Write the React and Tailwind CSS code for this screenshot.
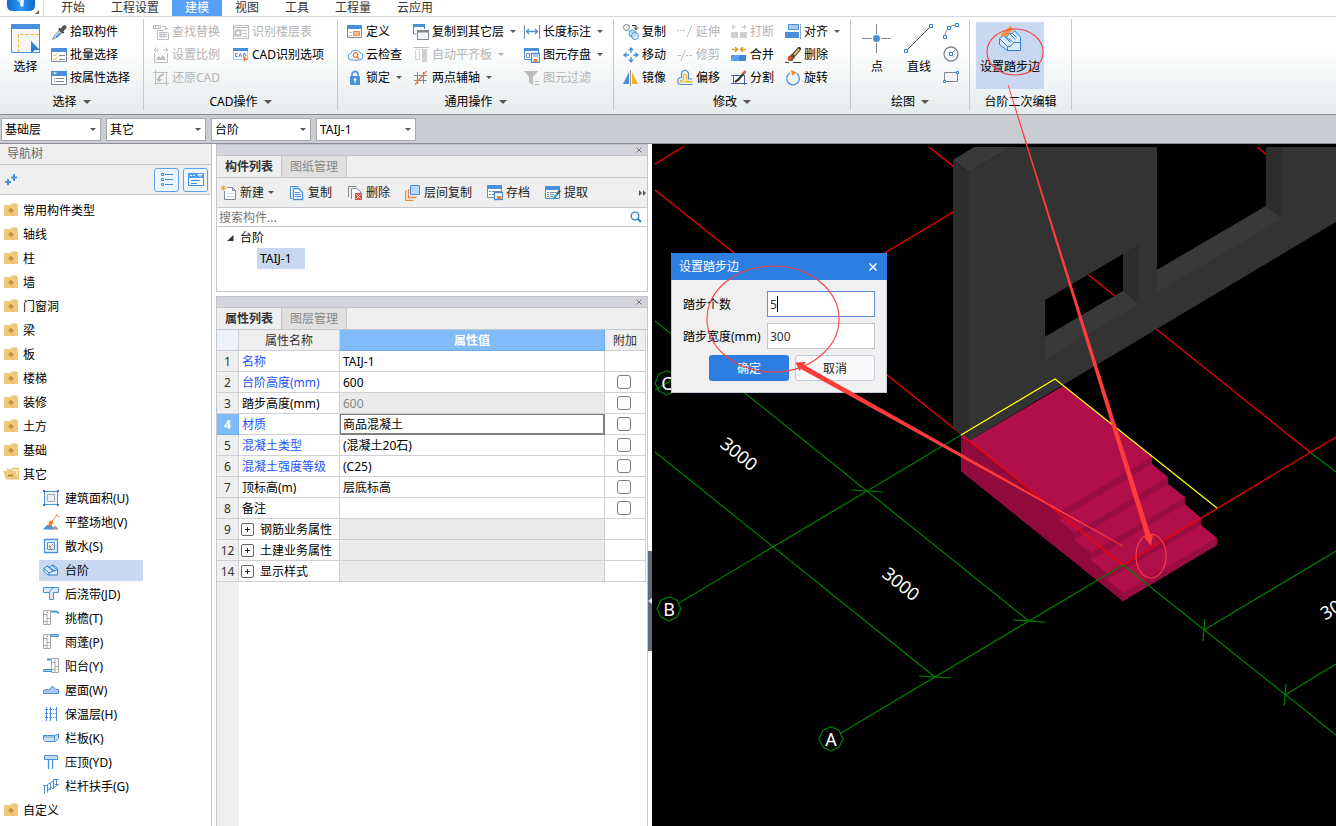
import React from "react";

const B = "#4a8fdc";
const G = "#bdbdbd";
const D = "#7d8992";

const art = {
  picker: (
    <>
      <path d="M1.500 15.500L3 12 8 6.500 10.500 9 5 14z" fill="#dfe6ea" stroke="#8896a0" />
      <path d="M5 13.500L9 9.500" stroke="#4a8fdc" strokeWidth="2" />
      <path d="M8 4.500L12.500 9" stroke="#333" strokeWidth="2" />
      <path d="M10.500 6.500L13.500 3.200" stroke="#555" strokeWidth="4" strokeLinecap="round" />
    </>
  ),
  batch: (
    <>
      <path d="M.5 2.500h15v12H.5z" fill="#fff" stroke={D} />
      <path d="M0 1h16v4H0z" fill={B} />
      <path d="M2 7.500l1.500 1.500L6 6.500M2 11.500l1.500 1.500L6 10.500" stroke="#f0a020" fill="none" />
      <path d="M8 8.500h6M8 12.500h6" stroke={D} />
    </>
  ),
  byprop: (
    <>
      <path d="M.5 2.500h15v12H.5z" fill="#fff" stroke={D} />
      <path d="M0 1h16v5H0z" fill={B} />
      <path d="M2 2.500h4l-2 2z" fill="#fff" />
      <path d="M3 8.500h1M5 8.500h8M3 11.500h1M5 11.500h8" stroke={D} />
    </>
  ),
  findrep: (
    <>
      <path d="M.5 1.500h7v3h-7zM2.500 1.500v3M5.500 1.500v3" fill="none" stroke={G} />
      <path d="M9 2.500h4v3M11 4l2 2 2-2" fill="none" stroke={G} />
      <path d="M4.500 6.500h6M4.500 6.500v9h11V9h-2" fill="none" stroke={G} />
      <path d="M6 8.500h8M6 10.500h8M6 12.500h8M8 8v6M11 8v6" stroke={G} />
    </>
  ),
  ratio: (
    <>
      <path d="M1 3h5M3.500.5L1 3l2.500 2.500M10 3h5M12.500.5L15 3l-2.500 2.500" fill="none" stroke={G} />
      <path d="M1.500 6.500v9h13v-9" fill="none" stroke={G} />
      <path d="M3 13l2.500-4 2 2L10 8l3 5z" fill={G} />
    </>
  ),
  restore: (
    <>
      <path d="M2.500 0v15M13.500 2v14M0 2.500h15M2 13.500h14" stroke={G} />
      <path d="M11 4.500C7 5 5.500 7 5.500 10" fill="none" stroke={G} strokeWidth="2" />
      <path d="M3 9h6l-3 3.500z" fill={G} />
    </>
  ),
  floors: (
    <>
      <path d="M.5 1.500h15v13H.5zM.5 3.500h15" fill="#fff" stroke={G} />
      <path d="M2.500 6.500h5v5h-5z" fill="none" stroke={G} strokeWidth="2" />
      <path d="M9.500 6.500H14M9.500 9.500H14M9.500 12.500H14" stroke={G} />
    </>
  ),
  cadopt: (
    <>
      <path d="M.5 2.500h14v10H.5z" fill="#fff" stroke="#a9cdf2" />
      <path d="M0 1h15v3H0z" fill={B} />
      <path d="M4.500 6.500h-2v3h2M6 10l1-3.500h.5L8.500 10M10.500 10V6.500h1.500l1 1.500-1 1.500" fill="none" stroke={B} />
      <path d="M10 8.500l5 4-2.200.4L11 15z" fill="#f07a3c" />
    </>
  ),
  define: (
    <>
      <path d="M.5 2.500h14v11H.5z" fill="#fff" stroke={D} />
      <path d="M0 1h15v4H0z" fill={B} />
      <path d="M2 8.500h3M2 11.500h3" stroke={G} />
      <path d="M6.500 7.500h6v4h-6z" fill="#f7c08a" stroke="#e88a3a" />
    </>
  ),
  cloud: (
    <>
      <path d="M4 13a3.300 3.300 0 01-.3-6.500 5 5 0 019-1A3.800 3.800 0 0112.500 13z" fill="#fff" stroke={B} />
      <circle cx="8.500" cy="8" r="2.300" fill="none" stroke="#f07a3c" strokeWidth="1.300" />
      <path d="M10.200 9.800l2 2.200" stroke="#f07a3c" strokeWidth="1.300" />
    </>
  ),
  lock: (
    <>
      <path d="M5 7V4.500a3 3 0 016 0V7" fill="none" stroke="#5b97dc" strokeWidth="1.800" />
      <rect x="3" y="6" width="10" height="9" rx="1" fill="#4a8fdc" />
      <circle cx="8" cy="9.500" r="1.200" fill="#fff" />
      <path d="M8 10v3" stroke="#fff" />
    </>
  ),
  copyto: (
    <>
      <path d="M3.500 10H.5V1.500h11V5" fill="none" stroke={B} />
      <path d="M0 0h12v3H0z" fill={B} />
      <path d="M4.500 7.500h11v8h-11z" fill="#f4f8fc" stroke={D} />
      <path d="M4 6h12v2.500H4z" fill={D} />
    </>
  ),
  level: (
    <>
      <path d="M0 .5h16" stroke={G} />
      <path d="M2.500 2.500h4v10h-4z" fill="#fff" stroke="#d5d5d5" />
      <path d="M9 2h5v13H9z" fill="#cfcfcf" />
    </>
  ),
  twopt: (
    <>
      <path d="M4.500 2v12M10.500 2v12M1 5.500h13M1 10.500h13" stroke={D} />
      <path d="M2 14.500L13.500 1" stroke="#f07a3c" strokeWidth="1.200" />
    </>
  ),
  dim: (
    <>
      <path d="M.5 1v14M15.500 1v14" stroke={D} />
      <path d="M2 7.500h12M5 5L2.500 7.500 5 10M11 5l2.500 2.500L11 10" fill="none" stroke={B} strokeWidth="1.300" />
    </>
  ),
  save: (
    <>
      <path d="M.5 2.500h14v10H.5z" fill="#fff" stroke={B} />
      <path d="M0 1h15v3H0z" fill={B} />
      <path d="M2.500 6.500h3v4h-3z" fill="none" stroke={D} />
      <path d="M7.500 6.500h8v9h-8z" fill="#fff" stroke={B} strokeWidth="1.400" />
      <path d="M9 7h5v3H9z" fill="#a9cdf2" />
      <path d="M9.500 12h4v3h-4z" fill="#f07a3c" />
    </>
  ),
  filter: (
    <>
      <path d="M0 1h14L9 7v8l-4-2.500V7z" fill={G} />
      <path d="M11 11.500h4M11 14.500h4" stroke={G} />
    </>
  ),
  copy: (
    <>
      <circle cx="3.500" cy="3.500" r="3" fill="#eee" stroke={D} />
      <circle cx="9.500" cy="9.500" r="3.500" fill="#bfe0fb" stroke={B} />
      <circle cx="12" cy="12" r="3.500" fill="#d6ecfd" fillOpacity=".6" stroke={B} />
      <path d="M9 1.500h4v4M11 3.500l2 2 2-2" fill="none" stroke="#222" />
    </>
  ),
  move: (
    <>
      <path d="M8 0l3 3.500H5zM8 16l3-3.500H5zM0 8l3.500-3v6zM16 8l-3.500-3v6z" fill={B} />
      <path d="M8 3v3M8 10v3M3 8h3M10 8h3" stroke={B} strokeWidth="1.400" />
    </>
  ),
  mirror: (
    <>
      <path d="M7.500 0v16" stroke="#999" />
      <path d="M6 2v12H0z" fill={B} />
      <path d="M9 2v12h6z" fill="#f5b21c" />
    </>
  ),
  extend: <path d="M0 6.500h2M3 6.500h2M6 6.500h2M15 1l-5 12" stroke={G} />,
  trim: <path d="M0 8.500h4M9 8.500h2M12 8.500h3M8 3L4 14" stroke={G} />,
  offset: (
    <>
      <path
        d="M15.500 9.500H11.500V4.500a3.500 3.500 0 00-7 0V8A3.500 3.500 0 004 15h11.500"
        transform="translate(0 -.5)"
        fill="none"
        stroke={B}
        strokeWidth="1.200"
      />
      <path d="M15.500 11.500H9.500V5q-1.500-2-3 0v5Q3 10 3 12h12.500" fill="none" stroke="#f0b32a" strokeWidth="1.200" />
    </>
  ),
  brk: (
    <>
      <path d="M1 3h4M3 1L1 3l2 2M10 3h5M13 1l2 2-2 2" fill="none" stroke={G} />
      <path d="M0 8h7v6H0zM9 8h7v6H9z" fill="#cfcfcf" />
    </>
  ),
  merge: (
    <>
      <path d="M1 2.500h5M4 0l2.500 2.500L4 5M15 2.500h-5M12 0L9.500 2.500 12 5" fill="none" stroke="#e8902a" strokeWidth="1.300" />
      <path d="M0 8h8v6H0z" fill="#5ba0ea" />
      <path d="M8 8h7v6H8z" fill="#3f86d8" />
    </>
  ),
  split: (
    <>
      <path d="M2.500 5.500h11v8h-11zM0 5.500h5M0 13.500h16M13.500 5v10" fill="none" stroke="#4763a8" />
      <path d="M4 12l4-3" stroke="#222" strokeWidth="2" />
      <path d="M7 10l6-7" stroke="#333" strokeWidth="2" />
      <path d="M12 4l2.500-3" stroke="#d55b3c" strokeWidth="2.500" />
    </>
  ),
  align: (
    <>
      <path d="M3.500.5h10v5h-10z" fill="#a9cdf7" stroke={B} />
      <path d="M0 8h14v6H0z" fill={B} />
      <path d="M15.500 0v15" stroke="#9ab" />
    </>
  ),
  erase: (
    <>
      <path d="M0 15.500h4M8 15.500h8" stroke="#444" />
      <path d="M8 9l6-7" stroke="#333" strokeWidth="4" strokeLinecap="round" />
      <path d="M9 8l5-6" stroke="#e5b96a" strokeWidth="2" />
      <path d="M3 10l4-3 3 3-3 4H4z" fill="#7a4a22" />
      <circle cx="5" cy="11.500" r="2.300" fill="#e04a1c" />
    </>
  ),
  rotate: (
    <>
      <path d="M5 3a6.300 6.300 0 107 .6" fill="none" stroke={B} strokeWidth="1.300" />
      <path d="M6 0l6 2.500L7 5.500z" fill="#f08a2c" />
    </>
  ),
  folder: (
    <>
      <path d="M8 1.500h6.500V3H8zM1 3h14v11H1z" fill="#efc97c" />
      <path d="M8 6v5M5.500 8.500h5" stroke="#c09036" strokeWidth="1.800" />
    </>
  ),
  folderOpen: (
    <>
      <path d="M3.500 4h5l1-1.500h6V13H14" fill="#fbefd2" stroke="#e8c069" strokeWidth="1.300" />
      <path d="M0 5h12.500L15 13.500H3z" fill="#efc97c" />
      <path d="M5 9.500h5" stroke="#a67c30" strokeWidth="1.500" />
    </>
  ),
  area: (
    <>
      <path d="M1.500 1.500h13v13h-13z" fill="#eef4fb" stroke={B} />
      <path d="M4.500 4.500h7v7h-7z" fill="#eee" stroke="#aaa" />
      <path d="M0 0h2v2H0zM14 0h2v2h-2zM0 14h2v2H0zM14 14h2v2h-2z" fill="#41729f" />
    </>
  ),
  flat: (
    <>
      <path d="M0 15.500L4 11h4l4 4.500z" fill={B} />
      <path d="M8 15.500l4-4 4 4z" fill="#999" />
      <path d="M9 7l5-6M12.500 0L16 3" stroke="#e8813c" />
      <path d="M7 7l3 1-1.500 3L5.500 12z" fill="#f07a2c" stroke="#f07a2c" strokeLinejoin="round" />
    </>
  ),
  apron: (
    <>
      <path d="M1.500 1.500h13v13h-13z" fill="#eef5fd" stroke={B} strokeWidth="1.300" />
      <path d="M4.500 4.500h7v7h-7z" fill="#fff" stroke={B} />
      <path d="M10 6L6.500 9.500M6.500 7v3h3" fill="none" stroke="#f07a2c" />
    </>
  ),
  steps: (
    <path
      d="M1 6.500L4 4l3 1.500L9 3l3 1 2.500 3v6H5L1 9.500zM4 4l6 5M7 5.500l5 4M9 3l4 4.500M1 6.500l5 4.500v2M6 11l4-2 4.500-1.500"
      fill="#dceafb"
      stroke="#2f83d2"
    />
  ),
  jd: (
    <>
      <path d="M.5 1.500h15v5h-5v7h-4v-7h-6z" fill="#dbe9fa" stroke={B} />
      <path d="M6.500 6.500Q7 3 11 1.500" fill="none" stroke={B} />
    </>
  ),
  eave: (
    <>
      <path d="M.5.5h7v14h-7zM.5 4.500H4M4 8.500h3.500M.5 11.500H4M4 .5v14" fill="#fff" stroke="#a6a6a6" />
      <path d="M8 1.500h5l3 1.500" fill="none" stroke={B} strokeWidth="1.800" />
    </>
  ),
  canopy: (
    <>
      <path d="M.5.5h7v14h-7zM.5 4.500H4M4 8.500h3.500M.5 11.500H4M4 .5v14" fill="#fff" stroke="#a6a6a6" />
      <path d="M8 .5h7.500v2H8z" fill="#a9cdf2" stroke={B} />
    </>
  ),
  balcony: (
    <>
      <path d="M8.500.5h7v14h-7zM8.500 4.500H12M12 8.500h3.500M8.500 11.500H12M12 .5v14" fill="#fff" stroke="#a6a6a6" />
      <path d="M4 1.500h4" stroke={B} strokeWidth="2" />
      <path d="M.5 11.500h8v2h-8z" fill="#a9cdf2" stroke={B} />
    </>
  ),
  roof: <path d="M.5 11.500v-3l3.500-1 2 .5 2-2.500 2-1 3 3h2.500v4z" fill="#a9c8ee" stroke={B} />,
  insul: (
    <>
      <path d="M3.500 1v14M7.500 1v14M13.500 1v14" stroke={B} />
      <path d="M2 3.500h12M2 7.500h12M2 11.500h12" stroke={B} strokeDasharray="1 1" />
    </>
  ),
  slab: <path d="M.5 5.500h11v6H2.500l-2-1.500zM11.500 5.500l4-1.500v4l-3 3.500h-1M.5 5.500l2 1.500h9" fill="#cfe1f7" stroke={B} />,
  coping: (
    <>
      <path d="M1.500 1.500h13v4h-13z" fill="#c3daf5" stroke={B} />
      <path d="M5.500 6v9M9.500 6v9" stroke={B} strokeWidth="1.300" />
    </>
  ),
  rail: (
    <path d="M0 7.500h4M1.500 7v8.500M4.500 7v7.500M4 13l5-4M4 7l6-4M7.500 5v7M10.500 2v9M9 11l6-4.500M10 1.500h5.500M13.500 1v7M12 6.500h4" fill="none" stroke={B} />
  ),
  fresh: (
    <>
      <path d="M6 2.500h5.500l3 3v9h-11V6" fill="#fff" stroke={D} />
      <path d="M11.500 2.500v3h3" fill="none" stroke={D} />
      <path d="M6 8.500h7M6 11.500h7" stroke="#ccd" />
      <path d="M0 3h5M2.500.5v5M.5 1l4 4M4.500 1l-4 4" stroke="#f0a02c" />
    </>
  ),
  dup: (
    <>
      <path d="M3 13.500H1.500v-12h8" fill="none" stroke={B} />
      <path d="M4.500 3.500h5l4 4v7h-9z" fill="#fff" stroke={B} strokeWidth="1.300" />
      <path d="M6 7.500h5M6 9.500h6M6 11.500h6" stroke={B} />
    </>
  ),
  del: (
    <>
      <path d="M1.500 12V1.500h8" fill="none" stroke={D} />
      <path d="M4.500 14V3.500h5l4 3V9" fill="#fff" stroke={D} />
      <path d="M8 8h7v7H8z" fill="#d9534f" />
      <path d="M9.500 9.500l4 4M13.500 9.500l-4 4" stroke="#fff" />
    </>
  ),
  layers: (
    <>
      <path d="M.5 5.500v10h8M3.500 4v8.500h8" fill="none" stroke="#ee8a3c" strokeWidth="1.300" />
      <path d="M5.500.5h9v9h-9z" fill="#b8d9fb" stroke={B} />
    </>
  ),
  archive: (
    <>
      <path d="M.5 1.500h14v11H.5z" fill="#fff" stroke={D} />
      <path d="M0 0h15v4H0z" fill={B} />
      <path d="M2 6.500h2M5 6.500h9M2 9.500h2M5 9.500h3" stroke={D} />
      <path d="M7.500 7.500h8v7h-8z" fill="#fff" stroke={B} strokeWidth="1.400" />
      <path d="M10 11h4v3h-4z" fill="#f07a3c" />
    </>
  ),
  extract: (
    <>
      <path d="M.5 2.500h14v11H.5z" fill="#fff" stroke={B} />
      <path d="M0 1h15v4H0z" fill={B} />
      <path d="M2 7.500h2M5 7.500h6M2 9.500h2M5 9.500h4M2 11.500h2M5 11.500h3" stroke={D} />
      <path d="M8 14l5-6" stroke="#2aa0c8" strokeWidth="2" />
      <path d="M12 9l3-3.500" stroke="#555" strokeWidth="2.500" />
    </>
  ),
};

const Icon = ({ n }) => (
  <svg viewBox="0 0 16 16" className="h-4 w-4 shrink-0" fill="none" aria-hidden="true">
    {art[n]}
  </svg>
);

const Caret = ({ tone = "text-[#555]" }) => (
  <svg viewBox="0 0 6 3" className={`h-[3px] w-[6px] shrink-0 ${tone}`} aria-hidden="true">
    <path d="M0 0h6L3 3z" fill="currentColor" />
  </svg>
);

function Tool({ icon, label, off, caret }) {
  return (
    <button
      disabled={off}
      className={`flex h-[23px] items-center gap-[3px] whitespace-nowrap ${off ? "text-[#b4b4b4]" : "text-black"}`}
    >
      <Icon n={icon} />
      <span>{label}</span>
      {caret && (
        <span className="pl-[3px]">
          <Caret tone={off ? "text-[#b4b4b4]" : "text-[#555]"} />
        </span>
      )}
    </button>
  );
}

const Col = ({ items, className = "" }) => (
  <div className={`flex flex-col items-start ${className}`}>
    {items.map((t) => (
      <Tool key={t[1]} icon={t[0]} label={t[1]} off={t[2]} caret={t[3]} />
    ))}
  </div>
);

function Group({ label, children, className = "", inset = "", caret = true }) {
  return (
    <section className={`flex shrink-0 flex-col pt-[3px] ${className}`}>
      <div className={`flex h-[69px] ${inset}`}>{children}</div>
      <div className="flex h-[25px] items-center justify-center gap-[6px] text-black">
        <span>{label}</span>
        {caret && (
          <svg viewBox="0 0 8 4" className="h-1 w-2 text-[#555]" aria-hidden="true">
            <path d="M0 0h8L4 4z" fill="currentColor" />
          </svg>
        )}
      </div>
    </section>
  );
}

const Sep = () => <div className="mt-[2px] mb-[4px] w-px shrink-0 bg-[#c6c9cc]" />;

function Big({ label, children, className = "" }) {
  return (
    <button className={`flex shrink-0 flex-col items-center whitespace-nowrap text-black ${className}`}>
      {children}
      <span className="leading-[26px]">{label}</span>
    </button>
  );
}

function Ribbon() {
  return (
    <div className="flex h-[98px] border-b border-[#8b8d91] bg-linear-to-b from-white from-30% to-[#e6ebec]">
      <Group label="选择" className="w-[143px]">
        <Big label="选择" className="w-[51px] pt-1">
          <svg viewBox="0 0 30 30" className="h-[30px] w-[30px]" fill="none" aria-hidden="true">
            <path d="M.5.500h28v28H.5z" fill="#f4f6f8" stroke={B} />
            <path d="M0 0h29v5H0z" fill={B} />
            <path d="M27.500 10.500H7.500v18" stroke="#f5b21c" strokeDasharray="3 2" />
            <path d="M20 17l9 9h-5l-4 3.500z" fill="#2f7fd4" />
          </svg>
        </Big>
        <Col
          items={[
            ["picker", "拾取构件"],
            ["batch", "批量选择"],
            ["byprop", "按属性选择"],
          ]}
        />
      </Group>
      <Sep />
      <Group label="CAD操作" className="w-[193px]" inset="pl-[9px]">
        <Col
          className="w-20"
          items={[
            ["findrep", "查找替换", true],
            ["ratio", "设置比例", true],
            ["restore", "还原CAD", true],
          ]}
        />
        <Col
          items={[
            ["floors", "识别楼层表", true],
            ["cadopt", "CAD识别选项"],
          ]}
        />
      </Group>
      <Sep />
      <Group label="通用操作" className="w-[275px]" inset="pl-[9px]">
        <Col
          className="w-[66px]"
          items={[
            ["define", "定义"],
            ["cloud", "云检查"],
            ["lock", "锁定", false, true],
          ]}
        />
        <Col
          className="w-[111px]"
          items={[
            ["copyto", "复制到其它层", false, true],
            ["level", "自动平齐板", true, true],
            ["twopt", "两点辅轴", false, true],
          ]}
        />
        <Col
          items={[
            ["dim", "长度标注", false, true],
            ["save", "图元存盘", false, true],
            ["filter", "图元过滤", true],
          ]}
        />
      </Group>
      <Sep />
      <Group label="修改" className="w-[236px]" inset="pl-[9px]">
        <Col className="w-[54px]" items={[["copy", "复制"], ["move", "移动"], ["mirror", "镜像"]]} />
        <Col className="w-[54px]" items={[["extend", "延伸", true], ["trim", "修剪", true], ["offset", "偏移"]]} />
        <Col className="w-[54px]" items={[["brk", "打断", true], ["merge", "合并"], ["split", "分割"]]} />
        <Col items={[["align", "对齐", false, true], ["erase", "删除"], ["rotate", "旋转"]]} />
      </Group>
      <Sep />
      <Group label="绘图" className="w-[118px]">
        <Big label="点" className="w-[52px] pt-1">
          <svg viewBox="0 0 30 30" className="h-[30px] w-[30px]" aria-hidden="true">
            <path d="M14.500 0v10M14.500 19v10M0 14.500h10M19 14.500h10" stroke={D} />
            <circle cx="14.500" cy="14.500" r="3.500" fill={B} />
          </svg>
        </Big>
        <Big label="直线" className="w-8 pt-1">
          <svg viewBox="0 0 30 30" className="h-[30px] w-[30px]" aria-hidden="true">
            <path d="M2 27L27 2" stroke="#444" />
            <path d="M.5 25.500h3v3h-3zM25.500.5h3v3h-3z" fill="#fff" stroke="#2f7fd4" />
          </svg>
        </Big>
        <div className="flex flex-col gap-[7px] pt-[3px] pl-2">
          <button aria-label="圆弧">
            <svg viewBox="0 0 16 16" className="h-4 w-4" fill="none" aria-hidden="true">
              <path d="M1.500 14.500Q2 3 14.500 1.500" stroke={D} />
              <path d="M.5 12.500h3v3h-3zM4.500 3.500h3v3h-3zM12.500.5h3v3h-3z" fill="#fff" stroke="#2f7fd4" />
            </svg>
          </button>
          <button aria-label="圆">
            <svg viewBox="0 0 16 16" className="h-4 w-4" fill="none" aria-hidden="true">
              <circle cx="8" cy="8" r="7" stroke={D} strokeWidth="1.300" />
              <path d="M8 8l4-4" stroke={D} />
              <path d="M6.500 6.500h3v3h-3z" fill="#fff" stroke="#2f7fd4" />
            </svg>
          </button>
          <button aria-label="矩形">
            <svg viewBox="0 0 16 16" className="h-4 w-4" fill="none" aria-hidden="true">
              <path d="M1.500 3.500h13v9h-13z" stroke={D} />
              <path d="M.5 11.500h2v2h-2zM13.500 2.500h2v2h-2z" fill="#fff" stroke="#2f7fd4" />
            </svg>
          </button>
        </div>
      </Group>
      <Sep />
      <Group label="台阶二次编辑" className="w-[101px]" inset="pl-[6px]" caret={false}>
        <Big label="设置踏步边" className="mt-[2px] h-[67px] w-[68px] bg-[#c8d8f0] pt-[2px]">
          <svg viewBox="0 0 30 30" className="h-[30px] w-[30px]" fill="none" aria-hidden="true">
            <path
              d="M4.500 14.500l4-3 3 2 3-4h3l2-3 6 7v13h-13l-8-6zM4.500 14.500l8 8v4M8.500 11.500l7 7M11.500 13.500l6 4M14.500 9.500l6 6M17.500 9.500l4 4M12.500 22.500h3l3-4h7"
              fill="#dceafb"
              stroke="#2f83d2"
            />
            <path d="M6 10L15.500 2l3 3L11 12.500 6 12z" fill="#f5923a" />
          </svg>
        </Big>
      </Group>
      <Sep />
    </div>
  );
}

const filters = [
  ["楼层", "基础层"],
  ["类别", "其它"],
  ["构件类型", "台阶"],
  ["构件", "TAIJ-1"],
];

function FilterBar() {
  return (
    <div className="flex h-[29px] items-start gap-[5px] border-b border-[#8a8c99] bg-[#c9ccd1] pt-[3px] pl-px">
      {filters.map(([name, value]) => (
        <div key={name} className="relative">
          <select
            aria-label={name}
            className="h-[23px] w-[100px] appearance-none border border-[#a9a9ab] bg-white pl-[3px] text-[12px] text-black"
          >
            <option>{value}</option>
          </select>
          <span className="pointer-events-none absolute top-[10px] right-[5px] flex">
            <Caret />
          </span>
        </div>
      ))}
    </div>
  );
}

const folders = ["常用构件类型", "轴线", "柱", "墙", "门窗洞", "梁", "板", "楼梯", "装修", "土方", "基础"];
const others = [
  ["area", "建筑面积(U)"],
  ["flat", "平整场地(V)"],
  ["apron", "散水(S)"],
  ["steps", "台阶"],
  ["jd", "后浇带(JD)"],
  ["eave", "挑檐(T)"],
  ["canopy", "雨蓬(P)"],
  ["balcony", "阳台(Y)"],
  ["roof", "屋面(W)"],
  ["insul", "保温层(H)"],
  ["slab", "栏板(K)"],
  ["coping", "压顶(YD)"],
  ["rail", "栏杆扶手(G)"],
];

const FolderRow = ({ label, open }) => (
  <li className="flex h-6 items-center gap-1 pl-[3px]">
    <Icon n={open ? "folderOpen" : "folder"} />
    <span className="pt-[2px]">{label}</span>
  </li>
);

function NavTree() {
  return (
    <aside className="flex w-[212px] shrink-0 flex-col border-r border-[#c4c6cc] bg-white text-black">
      <h2 className="flex h-[21px] items-center border-b border-[#c4c6cc] bg-[#efefef] pl-[7px] text-[#666]">导航树</h2>
      <div className="flex h-[30px] items-center border-b border-[#c4c6cc] bg-[#efefef] pr-[3px] pl-1">
        <button aria-label="展开" className="mr-auto">
          <svg viewBox="0 0 14 12" className="h-3 w-[14px]" aria-hidden="true">
            <path d="M4 5v6M1 8h6M10 0v7M7 3.500h6" stroke={B} strokeWidth="2" />
          </svg>
        </button>
        <button aria-label="列表" className="flex h-6 w-[25px] items-center justify-center rounded-[3px] border border-[#5ba2ec] bg-[#ecf5ff]">
          <svg viewBox="0 0 14 14" className="h-[14px] w-[14px]" fill="none" aria-hidden="true">
            <path d="M1.500.5h2v2h-2zM1.500 5.500h2v2h-2zM1.500 10.500h2v2h-2zM5 1.500h8M5 6.500h8M5 11.500h8" stroke="#3d8fe0" />
          </svg>
        </button>
        <button aria-label="窗口" className="ml-1 flex h-6 w-[25px] items-center justify-center rounded-[3px] border border-[#5ba2ec] bg-[#ecf5ff]">
          <svg viewBox="0 0 16 14" className="h-[14px] w-4" fill="none" aria-hidden="true">
            <path d="M.5.5h15v12H.5z" stroke="#3d8fe0" fill="#fff" />
            <path d="M0 0h16v5H0z" fill="#4c9cf0" />
            <path d="M2 2.500h2M5 2.500h2M10 1.500h4l-2 2z" stroke="#fff" />
            <path d="M3 7.500h9M3 10.500h6" stroke="#3d8fe0" />
          </svg>
        </button>
      </div>
      <ul className="pt-[3px]">
        {folders.map((f) => (
          <FolderRow key={f} label={f} />
        ))}
        <FolderRow label="其它" open />
        {others.map(([icon, label]) => (
          <li key={label} className="flex h-6 items-center pl-[39px]">
            <div className={`flex h-[21px] w-[104px] items-center gap-[6px] pl-1 ${label === "台阶" ? "bg-[#c8d8f0]" : ""}`}>
              <Icon n={icon} />
              <span className="pt-[2px] whitespace-nowrap">{label}</span>
            </div>
          </li>
        ))}
        <FolderRow label="自定义" />
      </ul>
    </aside>
  );
}

function DockHeader({ active, idle }) {
  return (
    <>
      <div className="flex h-[11px] shrink-0 items-center justify-end border-b border-[#c4c6cc] bg-[#d4d5da] pr-[5px]">
        <button aria-label="关闭面板">
          <svg viewBox="0 0 6 6" className="h-[6px] w-[6px]" aria-hidden="true">
            <path d="M.5.500l5 5M5.500.500l-5 5" stroke="#777" />
          </svg>
        </button>
      </div>
      <div className="flex h-[22px] shrink-0 border-b border-[#c4c6cc] bg-[#efefef]">
        <button className="w-[65px] border-r border-[#c4c6cc] font-bold text-[#333]">{active}</button>
        <button className="w-[65px] border-r border-[#c4c6cc] bg-[#e0e0e0] text-[#888]">{idle}</button>
      </div>
    </>
  );
}

const actions = [
  ["fresh", "新建", true],
  ["dup", "复制"],
  ["del", "删除"],
  ["layers", "层间复制"],
  ["archive", "存档"],
  ["extract", "提取"],
];

function ComponentPanel() {
  return (
    <section className="flex h-[148px] flex-col border border-[#c4c6cc] bg-white">
      <DockHeader active="构件列表" idle="图纸管理" />
      <div className="flex h-[30px] shrink-0 items-center gap-[15px] border-b border-[#c4c6cc] bg-[#efefef] pl-1 text-[#222]">
        {actions.map(([icon, label, caret]) => (
          <button key={label} className="flex items-center gap-[3px] whitespace-nowrap">
            <Icon n={icon} />
            {label}
            {caret && (
              <span className="pl-px">
                <Caret />
              </span>
            )}
          </button>
        ))}
        <button aria-label="更多" className="ml-auto">
          <svg viewBox="0 0 8 6" className="h-[6px] w-2" aria-hidden="true">
            <path d="M0 0l3 3-3 3zM4 0l3 3-3 3z" fill="#555" />
          </svg>
        </button>
      </div>
      <div className="flex h-[19px] shrink-0 items-center border-b border-[#c4c6cc] pr-[5px]">
        <input
          aria-label="搜索构件"
          placeholder="搜索构件..."
          className="h-[18px] min-w-0 flex-1 pl-[2px] text-[12px] outline-none placeholder:text-[#777]"
        />
        <svg viewBox="0 0 12 12" className="h-3 w-3" fill="none" aria-hidden="true">
          <circle cx="5" cy="5" r="3.800" stroke="#2b86c8" strokeWidth="1.300" />
          <path d="M7.500 7.500l3.500 3.500" stroke="#2b86c8" strokeWidth="2" />
        </svg>
      </div>
      <div className="flex flex-col items-start text-black">
        <div className="flex h-[21px] items-center gap-[6px] pl-[10px]">
          <svg viewBox="0 0 7 6" className="h-[6px] w-[7px]" aria-hidden="true">
            <path d="M6.500 0v6H0z" fill="#333" />
          </svg>
          <span>台阶</span>
        </div>
        <div className="ml-10 flex h-[21px] w-12 items-center bg-[#c8d8f0] pl-[3px]">TAIJ-1</div>
      </div>
    </section>
  );
}

const rows = [
  { no: 1, name: "名称", value: "TAIJ-1", link: true },
  { no: 2, name: "台阶高度(mm)", value: "600", link: true, box: true },
  { no: 3, name: "踏步高度(mm)", value: "600", box: true, locked: true },
  { no: 4, name: "材质", value: "商品混凝土", link: true, box: true, active: true },
  { no: 5, name: "混凝土类型", value: "(混凝土20石)", link: true, box: true },
  { no: 6, name: "混凝土强度等级", value: "(C25)", link: true, box: true },
  { no: 7, name: "顶标高(m)", value: "层底标高", box: true },
  { no: 8, name: "备注", value: "", box: true },
  { no: 9, name: "钢筋业务属性", group: true },
  { no: 12, name: "土建业务属性", group: true },
  { no: 14, name: "显示样式", group: true },
];

function PropertyPanel() {
  return (
    <section className="flex flex-1 flex-col border border-b-0 border-[#c4c6cc] bg-white">
      <DockHeader active="属性列表" idle="图层管理" />
      <table className="w-[429px] table-fixed border-separate border-spacing-0">
        <colgroup>
          <col className="w-[22px]" />
          <col className="w-[101px]" />
          <col />
          <col className="w-[41px]" />
        </colgroup>
        <thead>
          <tr className="h-[21px] text-[#333]">
            <th className="border-r border-b border-[#d0d0d4] bg-[#edf2f8] p-0" aria-label="序号" />
            <th className="border-r border-b border-[#d0d0d4] bg-[#efefef] p-0 pt-[2px] font-normal">属性名称</th>
            <th className="border-r border-b border-[#6aabf0] bg-[#82bbfa] p-0 pt-[2px] font-bold text-white">属性值</th>
            <th className="border-r border-b border-[#d0d0d4] bg-[#efefef] p-0 pt-[2px] font-normal">附加</th>
          </tr>
        </thead>
        <tbody>
          {rows.map((r) => (
            <tr key={r.no} className="h-[21px]">
              <th
                className={`border-r border-b p-0 pt-[2px] ${
                  r.active
                    ? "border-[#6aabf0] bg-[#82bbfa] font-bold text-white"
                    : "border-[#d0d0d4] bg-[#efefef] font-normal text-[#333]"
                }`}
              >
                {r.no}
              </th>
              <td
                className={`border-r border-b border-[#d0d0d4] p-0 whitespace-nowrap ${
                  r.group ? "pl-[2px]" : "pt-[2px] pl-[3px]"
                } ${r.link ? "text-[#1a56ff]" : "text-black"}`}
              >
                {r.group ? (
                  <span className="flex items-center gap-[6px]">
                    <button aria-label={`展开${r.name}`} className="flex h-[13px] w-[13px] items-center justify-center rounded-[2px] border border-[#666]">
                      <svg viewBox="0 0 5 5" className="h-[5px] w-[5px]" aria-hidden="true">
                        <path d="M2.500 0v5M0 2.500h5" stroke="#222" />
                      </svg>
                    </button>
                    <span className="pt-[2px]">{r.name}</span>
                  </span>
                ) : (
                  r.name
                )}
              </td>
              <td
                className={`p-0 pt-[2px] pl-[3px] ${
                  r.active
                    ? "border-r border-b border-[#808080] bg-white inset-ring-1 inset-ring-[#808080]"
                    : "border-r border-b border-[#d0d0d4]"
                } ${r.locked ? "bg-[#ebebeb] text-[#888]" : r.group ? "bg-[#ebebeb]" : "text-black"}`}
              >
                {r.value}
              </td>
              <td className="border-r border-b border-[#d0d0d4] p-0 pr-[2px]">
                {r.box && (
                  <input
                    type="checkbox"
                    aria-label={`附加${r.name}`}
                    className="mx-auto block h-[14px] w-[14px] appearance-none rounded-[3px] border border-[#808080] bg-white"
                  />
                )}
              </td>
            </tr>
          ))}
        </tbody>
      </table>
      <div className="w-[22px] flex-1 bg-[#efefef]" />
    </section>
  );
}

function Scene() {
  return (
    <svg
      viewBox="652 144 684 682"
      className="absolute top-0 left-0 h-[682px] w-[684px]"
      fill="none"
      role="img"
      aria-label="三维视图"
    >
      <g stroke="#f00" strokeWidth="1.200">
        <path d="M655 164L683 147M929 147L1311 453M1257 147L1290 173M679 376L960 208" />
        <path d="M655 190L961 434" />
      </g>
      <path fill="#333" fillRule="evenodd" d="M969 172L1012 147H1157V270L1266 206V147H1336V222L969 441zM1045 300L1123 254V291L1045 337z" />
      <path fill="#393939" d="M953 160L974 147H1012L969 172zM1157 270L1266 206L1282 219L1157 292zM1045 337L1123 291L1139 304L1045 360z" />
      <path fill="#2d2d2d" d="M953 160L969 172V441L953 428zM1266 147H1282V219L1266 206zM1123 254L1139 244V304L1123 291z" />
      <path
        fill="#b00f4a"
        d="M961 435L969 441L1063 386L1152 457V464L1168 477V484L1185 497V504L1201 518V525L1217 538V545L1123 601L961 471z"
      />
      <path
        fill="#900b3c"
        d="M961 435L1059 512V520L1074 533V540L1091 553V560L1107 573V580L1123 593V601L961 471z"
      />
      <path
        fill="#9a0d42"
        d="M1059 512L1152 457V464L1059 520zM1074 533L1168 477V484L1074 540zM1091 553L1185 497V504L1091 560zM1107 573L1201 518V525L1107 580zM1123 593L1217 538V545L1123 601z"
      />
      <path stroke="#f00" strokeWidth="1.200" d="M961 434L1123 565L1336 437" />
      <path stroke="#ff0" strokeWidth="1.300" d="M961 435L1055 379L1217 508" />
      <g stroke="#008000" strokeWidth="1.200">
        <path d="M655 321L1029 621M655 452L935 677M679 603L961 435M841 733L1123 565L1336 735M1204 630L1336 551M1285 695L1336 664M1311 453L1336 472M655 390L679 376" />
        <path d="M851 490L883 492M1013 620L1045 622M919 676L951 678M1205 619L1203 641M1286 684L1284 706" />
        <path d="M667 371l8 3 4 9-4 8-8 4-8-4-4-8 4-9zM669 597l8 3 4 9-4 8-8 4-8-4-4-8 4-9zM831 727l8 3 4 9-4 8-8 4-8-4-4-8 4-9z" />
      </g>
      <g fill="#fff" fontSize="18" textAnchor="middle">
        <text x="667" y="390">C</text>
        <text x="669" y="616">B</text>
        <text x="831" y="746">A</text>
        <text transform="translate(735 459) rotate(39)">3000</text>
        <text transform="translate(897 589) rotate(39)">3000</text>
        <text transform="translate(1343 610) rotate(-31)">3000</text>
      </g>
    </svg>
  );
}

function StepDialog() {
  return (
    <div
      role="dialog"
      aria-label="设置踏步边"
      className="absolute top-[109px] left-[19px] w-[216px] border border-[#c3cbd8] border-t-[#2c7ee0] bg-[#f0f0f0]"
    >
      <div className="-mx-px flex h-[26px] items-center justify-between bg-[#2c7ee0] pr-[10px] pl-2 text-white">
        <span>设置踏步边</span>
        <button aria-label="关闭">
          <svg viewBox="0 0 8 8" className="h-2 w-2" aria-hidden="true">
            <path d="M.5.500l7 7M7.500.500l-7 7" stroke="#fff" strokeWidth="1.500" />
          </svg>
        </button>
      </div>
      <form className="flex flex-col gap-[6px] p-[11px]">
        <div className="flex items-center justify-between text-black">
          <label htmlFor="count" className="pt-[2px]">
            踏步个数
          </label>
          <div className="relative">
            <input
              id="count"
              defaultValue="5"
              className="block h-[26px] w-[108px] border border-[#5f8fdc] bg-white pl-[2px] text-[12px] text-[#333] caret-transparent outline-none"
            />
            <span className="absolute top-[5px] left-[10px] h-4 w-px bg-black" />
          </div>
        </div>
        <div className="flex items-center justify-between text-black">
          <label htmlFor="width" className="pt-[2px]">
            踏步宽度(mm)
          </label>
          <input
            id="width"
            defaultValue="300"
            className="block h-[26px] w-[108px] border border-[#c2c4c8] bg-white pl-[2px] text-[12px] text-[#333] outline-none"
          />
        </div>
        <div className="flex justify-end gap-[6px]">
          <button type="button" className="h-[26px] w-20 rounded-[3px] bg-[#2c7ee0] pt-[2px] text-white">
            确定
          </button>
          <button type="button" className="h-[26px] w-20 rounded-[3px] border border-[#c3cbd8] bg-[#fafafa] pt-[2px] text-[#222]">
            取消
          </button>
        </div>
      </form>
    </div>
  );
}

function Annotations() {
  return (
    <svg
      viewBox="0 0 1336 826"
      className="pointer-events-none absolute top-0 left-0 h-[826px] w-[1336px]"
      fill="none"
      aria-hidden="true"
    >
      <g stroke="#fa4040" strokeWidth="1.100">
        <ellipse cx="1015" cy="52" rx="28" ry="23" />
        <ellipse cx="773" cy="319" rx="66" ry="53" />
        <ellipse cx="1151" cy="556" rx="15" ry="22" />
      </g>
      <g fill="#ff3b3b">
        <path d="M1007.700 85L1008.500 85L1151 536L1146 537.500z" />
        <path d="M1144 537L1153 534L1151 546z" />
        <path d="M1123 546.400L801 369L803.500 364.500L1123 545.600z" />
        <path d="M795.500 362.500L806 362L799.500 371z" />
      </g>
    </svg>
  );
}

const tabs = ["开始", "工程设置", "建模", "视图", "工具", "工程量", "云应用"];

export default function App() {
  return (
    <div className="relative flex min-h-screen flex-col overflow-hidden bg-white font-['Noto_Sans','Noto_Sans_CJK_SC',sans-serif] text-[12px] leading-4">
      <header className="flex h-[17px] overflow-hidden border-b border-[#d5d7da] bg-white">
        <div className="w-12 shrink-0">
          <svg viewBox="0 0 47 16" className="h-4 w-[47px]" aria-hidden="true">
            <defs>
              <linearGradient id="logo" x1="0" y1="0" x2="1" y2="0">
                <stop offset="0" stopColor="#1166cc" />
                <stop offset=".5" stopColor="#2a9bf5" />
                <stop offset="1" stopColor="#1166cc" />
              </linearGradient>
            </defs>
            <path d="M7-4H35V5q0 6-6 6H13q-6 0-6-6z" fill="url(#logo)" />
            <path d="M19-1h5l-.5 7q-1.500 2-3 0z" fill="#e8f4ff" />
            <path d="M17 0h4v2h-3z" fill="#9fd0ff" />
            <path d="M39 10v4h-4z" fill="#666" />
            <path d="M43.500 0v16" stroke="#d5d7da" />
          </svg>
        </div>
        <nav className="flex">
          {tabs.map((t) => (
            <button
              key={t}
              className={`flex items-center px-[13px] whitespace-nowrap ${
                t === "建模" ? "bg-[#57a2f8] text-white" : "text-[#333]"
              }`}
            >
              {t}
            </button>
          ))}
        </nav>
      </header>
      <Ribbon />
      <FilterBar />
      <div className="flex flex-1">
        <NavTree />
        <div className="ml-1 flex w-[432px] shrink-0 flex-col gap-1">
          <ComponentPanel />
          <PropertyPanel />
        </div>
        <div className="flex w-1 shrink-0 flex-col justify-center pt-[232px]">
          <button aria-label="收起面板" className="flex h-[100px] w-1 items-center bg-[#5f6b77]">
            <svg viewBox="0 0 4 6" className="h-[6px] w-1" aria-hidden="true">
              <path d="M4 0v6L0 3z" fill="#dde" />
            </svg>
          </button>
        </div>
        <main className="relative min-w-0 flex-1 overflow-hidden bg-black">
          <Scene />
          <StepDialog />
        </main>
      </div>
      <Annotations />
    </div>
  );
}
